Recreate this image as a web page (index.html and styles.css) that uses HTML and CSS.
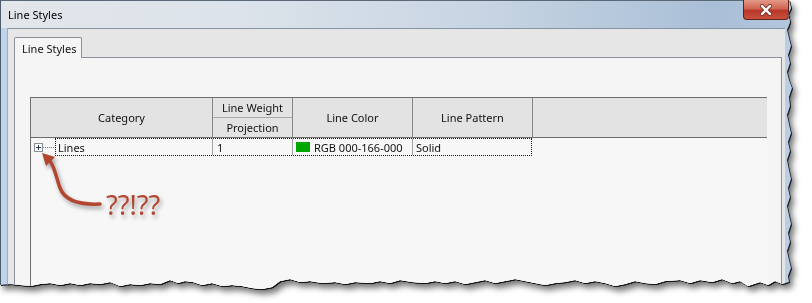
FILE: index.html
```html
<!DOCTYPE html>
<html lang="en">
<head>
  <meta charset="UTF-8" />
  <title>Line Styles</title>
  <link rel="stylesheet" href="styles.css">
</head>
<body>
  <div class="page">
    <div class="shadow">
      <div class="window">
        <div class="titlebar">
          <span class="title">Line Styles</span>
          <button class="close" title="Close">
            <svg width="14" height="12" viewBox="0 0 14 12">
              <path d="M3 2 L11 10 M11 2 L3 10" stroke="#7a3328" stroke-width="4" stroke-linecap="round"/>
              <path d="M3 2 L11 10 M11 2 L3 10" stroke="#fff" stroke-width="2.4" stroke-linecap="round"/>
            </svg>
          </button>
        </div>
        <div class="body">
          <div class="tabs">
            <div class="tab">Line Styles</div>
          </div>
          <div class="panel">
            <div class="grid">
              <div class="head">
                <div class="hcell cat">Category</div>
                <div class="hcell weight">Line Weight</div>
                <div class="hcell color">Line Color</div>
                <div class="hcell pattern">Line Pattern</div>
                <div class="hcell filler"></div>
                <div class="hcell proj">Projection</div>
              </div>
              <div class="row">
                <div class="expander">
                  <svg class="plus" width="9" height="9" viewBox="0 0 9 9">
                    <rect x="0.5" y="0.5" width="8" height="8" fill="#fdfdfd" stroke="#8a8e96"/>
                    <path d="M2 4.5 H7 M4.5 2 V7" stroke="#2b3a55"/>
                  </svg>
                  <span class="tree-line"></span>
                </div>
                <div class="focus">
                  <div class="cell name">Lines</div>
                  <div class="cell value">1</div>
                  <div class="cell swatch-cell"><span class="swatch"></span>RGB 000-166-000</div>
                  <div class="cell last">Solid</div>
                </div>
              </div>
            </div>
          </div>
        </div>
      </div>
    </div>

    <!-- annotation over the dialog -->
    <svg class="note" width="200" height="240" viewBox="0 0 200 240">
      <path d="M100 204 C 80 205, 65 201, 60 188 C 56 177, 55 168, 50 161" stroke="#b24630" stroke-width="3.5" fill="none" stroke-linecap="round"/>
      <polygon points="42,153 55,157 46,166" fill="#b24630"/>
      <text x="106" y="215" class="note-text">??!??</text>
    </svg>
  </div>
</body>
</html>
```

FILE: styles.css
```css
* {
  box-sizing: border-box;
}
body {
  margin: 0;
  background: #fff;
  font-family: 'Noto Sans', 'Open Sans', sans-serif;
  font-size: 11px;
  color: #111;
}
.page {
  position: relative;
  width: 812px;
  height: 303px;
}
.shadow {
  filter: drop-shadow(1px 1px 0 #151515) drop-shadow(3px 4px 3px rgba(0,0,0,0.55));
}
.window {
  width: 793px;
  height: 292px;
  display: flex;
  flex-direction: column;
  background: linear-gradient(to right, #bfd3ea, #c6d8ec 50%, #b9cee6);
  border-left: 1px solid #4d5b6b;
  clip-path: polygon(0 0, 789px 0, 791px 8px, 788px 14px, 790px 22px, 787px 30px, 789px 38px, 791px 46px, 788px 55px, 790px 63px, 787px 72px, 789px 80px, 792px 88px, 789px 97px, 790px 106px, 787px 115px, 789px 124px, 791px 133px, 788px 142px, 790px 151px, 787px 160px, 789px 170px, 791px 179px, 788px 188px, 790px 197px, 787px 206px, 789px 215px, 791px 224px, 788px 233px, 790px 242px, 787px 251px, 789px 260px, 791px 268px, 788px 276px, 789px 282px, 782px 284px, 775px 281px, 768px 285px, 760px 282px, 748px 286px, 740px 281px, 732px 283px, 722px 279px, 712px 282px, 700px 280px, 690px 283px, 680px 280px, 665px 281px, 655px 284px, 645px 283px, 635px 281px, 625px 284px, 615px 286px, 605px 283px, 595px 281px, 585px 283px, 575px 280px, 565px 282px, 555px 283px, 545px 285px, 535px 283px, 525px 281px, 515px 279px, 505px 281px, 495px 283px, 485px 280px, 475px 282px, 465px 284px, 455px 281px, 445px 283px, 435px 281px, 425px 283px, 412px 282px, 400px 280px, 390px 283px, 380px 281px, 370px 283px, 355px 282px, 345px 284px, 335px 282px, 322px 283px, 310px 281px, 300px 282px, 290px 279px, 280px 281px, 272px 287px, 262px 289px, 252px 288px, 242px 286px, 232px 285px, 222px 286px, 212px 283px, 202px 285px, 193px 282px, 185px 281px, 178px 283px, 170px 280px, 160px 284px, 150px 283px, 140px 285px, 130px 284px, 120px 286px, 110px 282px, 100px 284px, 90px 283px, 80px 285px, 70px 283px, 60px 285px, 50px 283px, 40px 284px, 30px 286px, 20px 285px, 10px 284px, 0 285px);
}
.titlebar {
  height: 28px;
  display: flex;
  align-items: flex-start;
  border-top: 1px solid #5b6878;
  background: linear-gradient(to right, #e2e6eb 0%, #dce3ea 30%, #c8d5e3 60%, #a9bfd7 90%, #b3c7dd 100%);
}
.title {
  padding: 6px 0 0 7px;
  font-size: 11px;
  color: #000;
}
.close {
  margin: -1px 4px 0 auto;
  width: 46px;
  height: 20px;
  padding: 0;
  display: flex;
  align-items: center;
  justify-content: center;
  border: 1px solid #5e231b;
  border-top: none;
  border-radius: 0 0 4px 4px;
  background: linear-gradient(to bottom, #e39a89 0%, #d06651 45%, #b8382a 55%, #c9503c 100%);
}
.body {
  flex: 1;
  margin-left: 6px;
  width: 778px;
  display: flex;
  flex-direction: column;
  padding: 0 3px 0 6px;
  background: #e6e6e6;
  border-left: 1px solid #a3acb7;
  border-top: 1px solid #8894a2;
}
.tabs {
  height: 28px;
  display: flex;
  align-items: flex-end;
}
.tab {
  position: relative;
  z-index: 1;
  width: 68px;
  height: 21px;
  margin-bottom: -1px;
  padding: 3px 0 0 7px;
  background: #f5f5f5;
  border: 1px solid #8d9099;
  border-bottom: none;
  border-radius: 2px 2px 0 0;
}
.panel {
  flex: 1;
  display: flex;
  flex-direction: column;
  background: #f5f5f5;
  border: 1px solid #8d9099;
  padding: 39px 0 0 15px;
}
.grid {
  flex: 1;
  width: 737px;
  background: #f7f7f7;
  border-left: 1px solid #6f6f6f;
}
.head {
  display: grid;
  grid-template-columns: 182px 80px 120px 120px 1fr;
  grid-template-rows: 20px 19px;
  background: #e3e3e3;
  border-top: 1px solid #6d6d6d;
  border-bottom: 1px solid #6d6d6d;
}
.hcell {
  display: flex;
  align-items: center;
  justify-content: center;
  border-right: 1px solid #858585;
}
.cat {
  grid-column: 1;
  grid-row: 1 / span 2;
}
.weight {
  grid-column: 2;
  grid-row: 1;
  border-bottom: 1px solid #a9a9a9;
}
.proj {
  grid-column: 2;
  grid-row: 2;
}
.color {
  grid-column: 3;
  grid-row: 1 / span 2;
}
.pattern {
  grid-column: 4;
  grid-row: 1 / span 2;
}
.filler {
  grid-column: 5;
  grid-row: 1 / span 2;
  border-right: none;
}
.row {
  display: flex;
  height: 18px;
}
.expander {
  width: 24px;
  display: flex;
  align-items: center;
  padding-left: 3px;
}
.plus {
  display: block;
  flex: none;
}
.tree-line {
  width: 11px;
  border-top: 1px dotted #7a7a7a;
}
.focus {
  display: flex;
  width: 477px;
  border: 1px dotted #1a1a1a;
}
.cell {
  display: flex;
  align-items: center;
  padding-left: 4px;
  border-right: 1px solid #a3a3a3;
  white-space: nowrap;
}
.name {
  width: 157px;
  padding-left: 2px;
}
.value {
  width: 80px;
}
.swatch-cell {
  width: 120px;
  padding-left: 3px;
}
.swatch {
  width: 14px;
  height: 10px;
  margin-right: 4px;
  background: #00a600;
}
.last {
  width: 118px;
  border-right: none;
  padding-left: 3px;
}
.note {
  position: absolute;
  left: 0;
  top: 0;
  overflow: visible;
  pointer-events: none;
  filter: drop-shadow(2px 3px 2px rgba(0,0,0,0.35));
}
.note-text {
  font-family: 'Noto Sans', sans-serif;
  font-size: 27px;
  fill: #b24630;
}
```
